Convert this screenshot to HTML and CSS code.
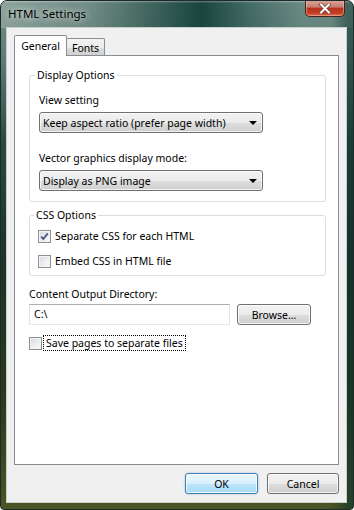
FILE: index.html
```html
<!DOCTYPE html>
<html>
<head>
<meta charset="utf-8">
<title>HTML Settings</title>
<link rel="stylesheet" href="styles.css">
</head>
<body>
<div class="window">
  <div class="titlebar">
    <span class="title">HTML Settings</span>
    <div class="close">
      <svg width="14" height="11" viewBox="0 0 14 11"><path d="M3 1.5 L11 9.5 M11 1.5 L3 9.5" stroke="#6b3a33" stroke-width="3.4" stroke-linecap="square"/><path d="M3 1.5 L11 9.5 M11 1.5 L3 9.5" stroke="#ffffff" stroke-width="2" stroke-linecap="square"/></svg>
    </div>
  </div>
  <div class="client">
    <div class="tabs">
      <div class="tab active">General</div>
      <div class="tab">Fonts</div>
    </div>
    <div class="panel">
      <fieldset class="group display">
        <legend>Display Options</legend>
        <div class="label">View setting</div>
        <div class="combo first"><span>Keep aspect ratio (prefer page width)</span><i class="arrow"></i></div>
        <div class="label second">Vector graphics display mode:</div>
        <div class="combo"><span>Display as PNG image</span><i class="arrow"></i></div>
      </fieldset>
      <fieldset class="group css">
        <legend>CSS Options</legend>
        <div class="check-row">
          <span class="box checked"><svg width="11" height="11" viewBox="0 0 11 11"><path d="M2.2 5.6 L4.3 8 L8.8 2.4" fill="none" stroke="#4a5a8a" stroke-width="1.9"/></svg></span>
          <span class="cap">Separate CSS for each HTML</span>
        </div>
        <div class="check-row">
          <span class="box"></span>
          <span class="cap">Embed CSS in HTML file</span>
        </div>
      </fieldset>
      <div class="label dir">Content Output Directory:</div>
      <div class="dir-row">
        <div class="input">C:\</div>
        <div class="btn browse">Browse...</div>
      </div>
      <div class="check-row save">
        <span class="box"></span>
        <span class="cap focus">Save pages to separate files</span>
      </div>
    </div>
    <div class="footer">
      <div class="btn default ok">OK</div>
      <div class="btn cancel">Cancel</div>
    </div>
  </div>
</div>
</body>
</html>
```

FILE: styles.css
```css
html, body {
  margin: 0;
  padding: 0;
}

body {
  width: 354px;
  height: 510px;
  overflow: hidden;
  background: #ffffff;
  font-family: "Noto Sans", "Open Sans", sans-serif;
  font-size: 10.5px;
  color: #000000;
}

.window {
  box-sizing: border-box;
  width: 354px;
  height: 510px;
  border: 1px solid #1e2a27;
  border-radius: 7px 7px 4px 4px;
  display: flex;
  flex-direction: column;
  overflow: hidden;
  background:
    linear-gradient(to right, rgba(0,0,0,0) 0, rgba(0,0,0,0) 330px, rgba(10,50,45,0.55) 346px),
    linear-gradient(to bottom, #72908a 0px, #5d7b75 60px, #2a4a42 140px, #1c3329 260px, #2c3a1c 400px, #4b5526 510px);
}

.titlebar {
  height: 27px;
  flex: 0 0 auto;
  display: flex;
  justify-content: space-between;
  align-items: flex-start;
  background:
    linear-gradient(to bottom, rgba(255,255,255,0.35) 0, rgba(255,255,255,0) 2px),
    linear-gradient(to right, rgba(150,168,162,0.75) 0, rgba(110,135,128,0.5) 90px, rgba(20,65,58,0.95) 200px, rgba(40,85,78,0.6) 250px, rgba(95,125,120,0.3) 300px, rgba(95,125,120,0.2) 352px);
}

.title {
  padding: 5px 0 0 7px;
  line-height: 16px;
  font-size: 11.5px;
  color: #000000;
  text-shadow: 0 0 6px rgba(255,255,255,0.7), 0 0 10px rgba(255,255,255,0.5);
}

.close {
  box-sizing: border-box;
  width: 40px;
  height: 17px;
  margin: -1px 8px 0 0;
  border: 1px solid #4a2019;
  border-top: none;
  border-radius: 0 0 5px 5px;
  display: flex;
  align-items: center;
  justify-content: center;
  background: linear-gradient(to bottom, #dba99f 0, #c87a6c 45%, #b5321f 50%, #c23d22 80%, #dc6a45 100%);
  box-shadow: inset 0 0 0 1px rgba(255,210,200,0.45);
}

.client {
  flex: 1 1 auto;
  margin: 0 7px 7px 6px;
  padding: 7px 7px 0 7px;
  background: #f0f0f0;
  display: flex;
  flex-direction: column;
  box-shadow: 0 0 0 1px #c7cfc9;
}

.tabs {
  display: flex;
  align-items: flex-end;
  height: 21px;
  margin-bottom: -1px;
}

.tab {
  box-sizing: border-box;
  height: 18px;
  width: 39px;
  margin-left: -1px;
  border: 1px solid #8c8e94;
  border-bottom: none;
  border-radius: 2px 2px 0 0;
  display: flex;
  align-items: center;
  justify-content: center;
  background: linear-gradient(to bottom, #f3f3f3 0, #ebebeb 50%, #dddddd 51%, #cfcfcf 100%);
}

.tab.active {
  height: 21px;
  width: 53px;
  margin-left: 0;
  position: relative;
  z-index: 1;
  background: #ffffff;
  border-color: #898c95;
}

.panel {
  box-sizing: border-box;
  height: 410px;
  flex: 0 0 auto;
  border: 1px solid #898c95;
  background: #ffffff;
  padding: 12px 12px 0 14px;
  display: flex;
  flex-direction: column;
}

.group {
  margin: 0;
  border: 1px solid #d5dfe5;
  border-radius: 3px;
  padding: 10px 9px 10px 9px;
}

.group legend {
  padding: 0 2px;
  margin-left: -4px;
  line-height: 15px;
}

.label {
  line-height: 15px;
}

.label.second {
  margin-top: 18px;
}

.combo {
  box-sizing: border-box;
  width: 224px;
  height: 21px;
  margin-top: 4px;
  border: 1px solid #707070;
  border-radius: 3px;
  padding: 0 4px 0 3px;
  display: flex;
  align-items: center;
  justify-content: space-between;
  background: linear-gradient(to bottom, #f2f2f2 0, #ebebeb 50%, #dddddd 51%, #cfcfcf 100%);
  box-shadow: inset 0 0 0 1px rgba(255,255,255,0.7);
}

.combo.first {
  margin-top: 4px;
}

.arrow {
  width: 0;
  height: 0;
  border-left: 4px solid transparent;
  border-right: 4px solid transparent;
  border-top: 4px solid #000000;
  margin-right: 1px;
}

.group.css {
  margin-top: 6px;
  padding: 4px 9px 5px 8px;
}

.check-row {
  display: flex;
  align-items: center;
  height: 18px;
}

.check-row + .check-row {
  margin-top: 7px;
}

.box {
  box-sizing: border-box;
  width: 13px;
  height: 13px;
  flex: 0 0 13px;
  border: 1px solid #8e8f8f;
  background: linear-gradient(135deg, #d5d9de 0, #eef0f2 60%, #fafafa 100%);
  box-shadow: inset 0 0 0 1px #f4f4f4;
  display: flex;
  align-items: center;
  justify-content: center;
}

.box svg {
  display: block;
}

.cap {
  margin-left: 1px;
  padding: 0 2px;
  border: 1px solid transparent;
  line-height: 14px;
}

.cap.focus {
  border: 1px dotted #000000;
}

.label.dir {
  margin-top: 11px;
}

.dir-row {
  display: flex;
  gap: 7px;
  margin-top: 2px;
}

.input {
  box-sizing: border-box;
  width: 201px;
  height: 21px;
  border: 1px solid #dbdfe6;
  border-top-color: #abadb3;
  border-left-color: #e2e3ea;
  border-right-color: #e2e3ea;
  border-bottom-color: #e3e9ef;
  background: #ffffff;
  padding-left: 4px;
  line-height: 19px;
}

.btn {
  box-sizing: border-box;
  height: 21px;
  border: 1px solid #707070;
  border-radius: 3px;
  display: flex;
  align-items: center;
  justify-content: center;
  background: linear-gradient(to bottom, #f2f2f2 0, #ebebeb 50%, #dddddd 51%, #cfcfcf 100%);
  box-shadow: inset 0 0 0 1px rgba(255,255,255,0.75);
}

.browse {
  width: 74px;
}

.check-row.save {
  margin-top: 9px;
}

.footer {
  display: flex;
  justify-content: flex-end;
  gap: 9px;
  padding-top: 8px;
}

.ok {
  width: 73px;
}

.cancel {
  width: 72px;
}

.btn.default {
  border-color: #3c7fb1;
  background: linear-gradient(to bottom, #eaf6fd 0, #d9f0fc 50%, #bee6fd 51%, #a7d9f5 100%);
  box-shadow: inset 0 0 0 1px rgba(255,255,255,0.8), 0 0 2px rgba(60,127,177,0.5);
}
```
